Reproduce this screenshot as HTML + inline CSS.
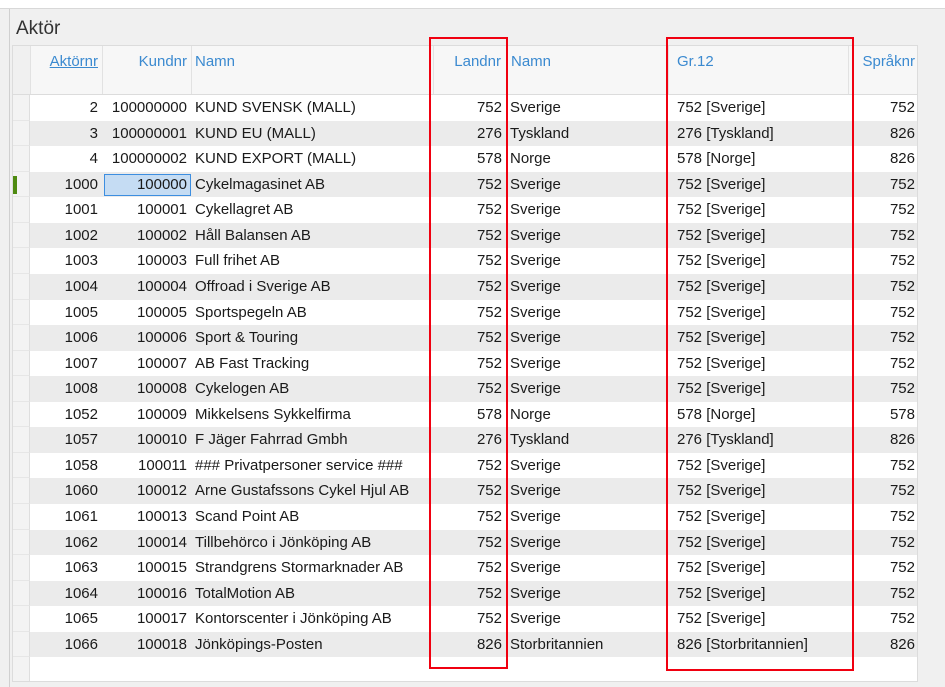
<!DOCTYPE html>
<html><head><meta charset="utf-8"><style>
*{margin:0;padding:0;box-sizing:border-box}
body{width:945px;height:687px;background:#f0f0f0;position:relative;overflow:hidden;font-family:"Liberation Sans",sans-serif;font-size:15px;color:#1a1a1a}
.top{position:absolute;left:0;top:0;width:945px;height:9px;background:#fff;border-bottom:1px solid #d8d8d8}
.lft{position:absolute;left:9px;top:9px;width:1px;height:678px;background:#d0d0d0}
.title{position:absolute;left:16px;top:18px;font-size:19px;color:#333}
.grid{position:absolute;left:12px;top:45px;width:906px;height:637px;background:#fff;border:1px solid #dcdcdc;overflow:hidden}
.hdr{position:absolute;left:0;top:0;width:906px;height:49px;background:#f7f7f7;border-bottom:1px solid #dcdcdc}
.hc{position:absolute;top:0;height:48px;border-right:1px solid #e2e2e2;color:#3b8ad0;padding-top:7px;white-space:nowrap}
.rows{position:absolute;left:0;top:49px;width:904px}
.r{height:25.57px;position:relative;white-space:nowrap}
.r:nth-child(even){background:#ebebeb}
.c{position:absolute;top:0;line-height:25.57px}
.sel{position:absolute;left:0;top:0;width:17px;height:100%;background:#f3f3f3;border-right:1px solid #dedede;border-bottom:1px solid #e6e6e6}
.a{left:18px;width:67px;text-align:right}
.k{left:90px;width:84px;text-align:right}
.n{left:182px}
.l{left:421px;width:68px;text-align:right}
.n2{left:497px}
.g{left:664px}
.s{left:836px;width:66px;text-align:right}
.red{position:absolute;border:2px solid #f00010}
</style></head><body>
<div class="top"></div><div class="lft"></div>
<div class="title">Aktör</div>
<div class="grid">
<div class="hdr">
<div class="hc" style="left:0;width:18px;background:#f0f0f0"></div>
<div class="hc" style="left:18px;width:72px;text-align:right;padding-right:4px"><u>Aktörnr</u></div>
<div class="hc" style="left:90px;width:89px;text-align:right;padding-right:4px">Kundnr</div>
<div class="hc" style="left:179px;width:242px;padding-left:3px">Namn</div>
<div class="hc" style="left:421px;width:73px;text-align:right;padding-right:5px">Landnr</div>
<div class="hc" style="left:494px;width:162px;padding-left:4px">Namn</div>
<div class="hc" style="left:656px;width:180px;padding-left:8px">Gr.12</div>
<div class="hc" style="left:836px;width:70px;text-align:right;padding-right:4px;border-right:none">Språknr</div>
</div>
<div class="rows">
<div class="r"><div class="sel"></div><span class="c a">2</span><span class="c k">100000000</span><span class="c n">KUND SVENSK (MALL)</span><span class="c l">752</span><span class="c n2">Sverige</span><span class="c g">752 [Sverige]</span><span class="c s">752</span></div>
<div class="r"><div class="sel"></div><span class="c a">3</span><span class="c k">100000001</span><span class="c n">KUND EU (MALL)</span><span class="c l">276</span><span class="c n2">Tyskland</span><span class="c g">276 [Tyskland]</span><span class="c s">826</span></div>
<div class="r"><div class="sel"></div><span class="c a">4</span><span class="c k">100000002</span><span class="c n">KUND EXPORT (MALL)</span><span class="c l">578</span><span class="c n2">Norge</span><span class="c g">578 [Norge]</span><span class="c s">826</span></div>
<div class="r"><div class="sel"><div style="position:absolute;left:0;top:4px;width:4px;height:18px;background:#4e8a10"></div></div><span class="c a">1000</span><span class="c k" style="left:91px;width:87px;top:2px;height:22px;line-height:20px;background:#c5dcf3;border:1px solid #3d8ee0;padding-right:3px">100000</span><span class="c n">Cykelmagasinet AB</span><span class="c l">752</span><span class="c n2">Sverige</span><span class="c g">752 [Sverige]</span><span class="c s">752</span></div>
<div class="r"><div class="sel"></div><span class="c a">1001</span><span class="c k">100001</span><span class="c n">Cykellagret AB</span><span class="c l">752</span><span class="c n2">Sverige</span><span class="c g">752 [Sverige]</span><span class="c s">752</span></div>
<div class="r"><div class="sel"></div><span class="c a">1002</span><span class="c k">100002</span><span class="c n">Håll Balansen AB</span><span class="c l">752</span><span class="c n2">Sverige</span><span class="c g">752 [Sverige]</span><span class="c s">752</span></div>
<div class="r"><div class="sel"></div><span class="c a">1003</span><span class="c k">100003</span><span class="c n">Full frihet AB</span><span class="c l">752</span><span class="c n2">Sverige</span><span class="c g">752 [Sverige]</span><span class="c s">752</span></div>
<div class="r"><div class="sel"></div><span class="c a">1004</span><span class="c k">100004</span><span class="c n">Offroad i Sverige AB</span><span class="c l">752</span><span class="c n2">Sverige</span><span class="c g">752 [Sverige]</span><span class="c s">752</span></div>
<div class="r"><div class="sel"></div><span class="c a">1005</span><span class="c k">100005</span><span class="c n">Sportspegeln AB</span><span class="c l">752</span><span class="c n2">Sverige</span><span class="c g">752 [Sverige]</span><span class="c s">752</span></div>
<div class="r"><div class="sel"></div><span class="c a">1006</span><span class="c k">100006</span><span class="c n">Sport &amp; Touring</span><span class="c l">752</span><span class="c n2">Sverige</span><span class="c g">752 [Sverige]</span><span class="c s">752</span></div>
<div class="r"><div class="sel"></div><span class="c a">1007</span><span class="c k">100007</span><span class="c n">AB Fast Tracking</span><span class="c l">752</span><span class="c n2">Sverige</span><span class="c g">752 [Sverige]</span><span class="c s">752</span></div>
<div class="r"><div class="sel"></div><span class="c a">1008</span><span class="c k">100008</span><span class="c n">Cykelogen AB</span><span class="c l">752</span><span class="c n2">Sverige</span><span class="c g">752 [Sverige]</span><span class="c s">752</span></div>
<div class="r"><div class="sel"></div><span class="c a">1052</span><span class="c k">100009</span><span class="c n">Mikkelsens Sykkelfirma</span><span class="c l">578</span><span class="c n2">Norge</span><span class="c g">578 [Norge]</span><span class="c s">578</span></div>
<div class="r"><div class="sel"></div><span class="c a">1057</span><span class="c k">100010</span><span class="c n">F Jäger Fahrrad Gmbh</span><span class="c l">276</span><span class="c n2">Tyskland</span><span class="c g">276 [Tyskland]</span><span class="c s">826</span></div>
<div class="r"><div class="sel"></div><span class="c a">1058</span><span class="c k">100011</span><span class="c n">### Privatpersoner service ###</span><span class="c l">752</span><span class="c n2">Sverige</span><span class="c g">752 [Sverige]</span><span class="c s">752</span></div>
<div class="r"><div class="sel"></div><span class="c a">1060</span><span class="c k">100012</span><span class="c n">Arne Gustafssons Cykel Hjul AB</span><span class="c l">752</span><span class="c n2">Sverige</span><span class="c g">752 [Sverige]</span><span class="c s">752</span></div>
<div class="r"><div class="sel"></div><span class="c a">1061</span><span class="c k">100013</span><span class="c n">Scand Point AB</span><span class="c l">752</span><span class="c n2">Sverige</span><span class="c g">752 [Sverige]</span><span class="c s">752</span></div>
<div class="r"><div class="sel"></div><span class="c a">1062</span><span class="c k">100014</span><span class="c n">Tillbehörco i Jönköping AB</span><span class="c l">752</span><span class="c n2">Sverige</span><span class="c g">752 [Sverige]</span><span class="c s">752</span></div>
<div class="r"><div class="sel"></div><span class="c a">1063</span><span class="c k">100015</span><span class="c n">Strandgrens Stormarknader AB</span><span class="c l">752</span><span class="c n2">Sverige</span><span class="c g">752 [Sverige]</span><span class="c s">752</span></div>
<div class="r"><div class="sel"></div><span class="c a">1064</span><span class="c k">100016</span><span class="c n">TotalMotion AB</span><span class="c l">752</span><span class="c n2">Sverige</span><span class="c g">752 [Sverige]</span><span class="c s">752</span></div>
<div class="r"><div class="sel"></div><span class="c a">1065</span><span class="c k">100017</span><span class="c n">Kontorscenter i Jönköping AB</span><span class="c l">752</span><span class="c n2">Sverige</span><span class="c g">752 [Sverige]</span><span class="c s">752</span></div>
<div class="r"><div class="sel"></div><span class="c a">1066</span><span class="c k">100018</span><span class="c n">Jönköpings-Posten</span><span class="c l">826</span><span class="c n2">Storbritannien</span><span class="c g">826 [Storbritannien]</span><span class="c s">826</span></div>
<div class="r" style="background:#fff;height:40px"><div class="sel"></div></div>
</div>
</div>
<div class="red" style="left:429px;top:37px;width:79px;height:632px"></div>
<div class="red" style="left:666px;top:37px;width:188px;height:634px"></div>
</body></html>
